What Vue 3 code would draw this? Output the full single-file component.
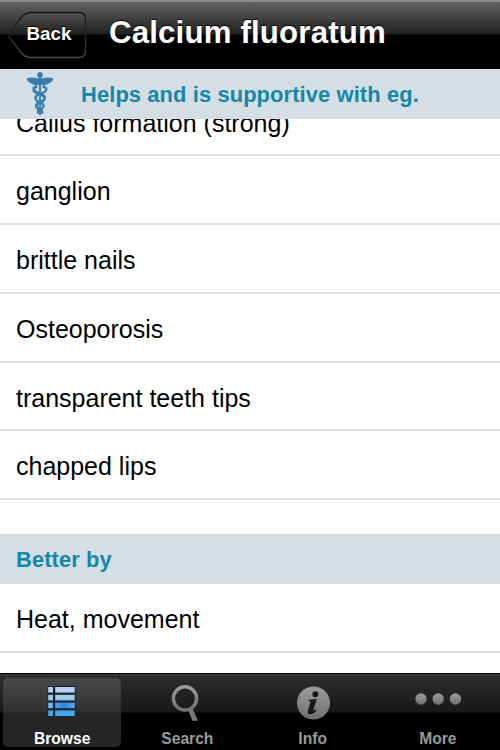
<template>
  <div class="screen">
    <header class="navbar">
      <button class="back-btn">
        <svg class="back-shape" width="80" height="48" viewBox="0 0 80 48">
          <defs>
            <linearGradient id="backFill" x1="0" y1="0" x2="0" y2="1">
              <stop offset="0" stop-color="#545454" />
              <stop offset="0.49" stop-color="#1c1c1c" />
              <stop offset="0.51" stop-color="#020202" />
              <stop offset="1" stop-color="#000" />
            </linearGradient>
            <linearGradient id="backLine" x1="0" y1="0" x2="0" y2="1">
              <stop offset="0" stop-color="#151515" />
              <stop offset="0.5" stop-color="#222" />
              <stop offset="1" stop-color="#4c4c4c" />
            </linearGradient>
          </defs>
          <path
            d="M1.5 25 L13 8 Q18 1.5 24 1.5 H72 Q78.5 1.5 78.5 8 V40 Q78.5 46.5 72 46.5 H24 Q18 46.5 13 40.5 Z"
            fill="url(#backFill)" stroke="url(#backLine)" stroke-width="1.3"
          />
        </svg>
        <span class="back-label">Back</span>
      </button>
      <h1 class="title">Calcium fluoratum</h1>
    </header>

    <div class="section-header">
      <svg class="caduceus" width="30" height="46" viewBox="0 0 30 46" fill="none" stroke="#397fae">
        <circle cx="15" cy="3.8" r="2.9" fill="#397fae" stroke="none" />
        <path
          d="M1.5 7.5 Q7 5.5 12.5 7.5 L15 6 L17.5 7.5 Q23 5.5 28.5 7.5 Q27 12.5 19 14.5 L15 13.5 L11 14.5 Q3 12.5 1.5 7.5 Z"
          fill="#397fae" stroke="none"
        />
        <path d="M15 7 V44" stroke-width="2" />
        <path d="M12.5 16 Q8.5 15.5 8.8 18.5 Q9 21 14 22.5 Q20 24.5 19.5 27.5 Q19 30 15 31.5 Q11 33 11.5 35.5 Q12 37.5 15 38.5 Q18 40 16.5 42.5" stroke-width="3" />
        <path d="M17.5 16 Q21.5 15.5 21.2 18.5 Q21 21 16 22.5 Q10 24.5 10.5 27.5 Q11 30 15 31.5 Q19 33 18.5 35.5 Q18 37.5 15 38.5 Q12 40 13.5 42.5" stroke-width="2.4" />
      </svg>
      <span>Helps and is supportive with eg.</span>
    </div>
    <ul class="list helps">
      <li v-for="item in helps" :key="item" class="row">{{ item }}</li>
    </ul>

    <div class="section-header better"><span>Better by</span></div>
    <ul class="list">
      <li v-for="item in betterBy" :key="item" class="row">{{ item }}</li>
    </ul>

    <nav class="tabbar">
      <div
        v-for="tab in tabs"
        :key="tab"
        :class="['tab', { active: tab === activeTab }]"
        @click="activeTab = tab"
      >
        <svg class="tab-icon" width="50" height="44" viewBox="0 0 50 44">
          <defs>
            <linearGradient id="grey" x1="0" y1="0" x2="0" y2="1">
              <stop offset="0" stop-color="#9b9b9b" />
              <stop offset="1" stop-color="#707070" />
            </linearGradient>
            <linearGradient id="bar3" gradientUnits="userSpaceOnUse" x1="11" y1="0" x2="38" y2="0">
              <stop offset="0" stop-color="#72bcf2" />
              <stop offset="0.6" stop-color="#2587e4" />
              <stop offset="1" stop-color="#58adf0" />
            </linearGradient>
          </defs>
          <g v-if="tab === 'Browse'">
            <rect x="10.5" y="8" width="28" height="31" fill="#17222d" />
            <g v-for="(bar, i) in bars" :key="i" :fill="bar">
              <rect x="11.2" :y="9 + i * 7.8" width="4.8" height="5.6" />
              <rect x="18.2" :y="9 + i * 7.8" width="19.5" height="5.6" />
            </g>
          </g>
          <g v-else-if="tab === 'Search'">
            <circle cx="23" cy="20.4" r="11.6" fill="none" stroke="url(#grey)" stroke-width="3.4" />
            <path d="M26 31.5 L30.2 29.6 L35.8 42.8 L30.4 42.8 Z" fill="#777" />
          </g>
          <g v-else-if="tab === 'Info'">
            <circle cx="25.5" cy="25" r="16.5" fill="url(#grey)" />
            <circle cx="27.4" cy="16.2" r="3" fill="#171717" />
            <path
              d="M21 21.7 L28.8 21 L25.3 32 Q25 33.5 27.5 31.5 L28.5 32.5 Q25.5 36.3 22 36.2 Q19 36 20 32.5 L22.5 24 Q22.7 23 20.8 23 Z"
              fill="#171717"
            />
          </g>
          <g v-else fill="url(#grey)">
            <circle cx="8" cy="21" r="5.7" />
            <circle cx="25.2" cy="21" r="5.7" />
            <circle cx="42.4" cy="21" r="5.7" />
          </g>
        </svg>
        <span class="tab-label">{{ tab }}</span>
      </div>
    </nav>
  </div>
</template>

<script setup>
import { ref } from 'vue'

const helps = [
  'Callus formation (strong)',
  'ganglion',
  'brittle nails',
  'Osteoporosis',
  'transparent teeth tips',
  'chapped lips',
]
const betterBy = ['Heat, movement']

const tabs = ['Browse', 'Search', 'Info', 'More']
const activeTab = ref('Browse')
const bars = ['#b9d3ee', '#9ccbf0', 'url(#bar3)', '#3fa9ea']
</script>

<style>
body {
  margin: 0;
  background: #fff;
}
</style>

<style scoped>
.screen {
  width: 500px;
  height: 750px;
  display: flex;
  flex-direction: column;
  overflow: hidden;
  background: #fff;
  color: #000;
  font-family: "Liberation Sans", Arial, sans-serif;
}

.navbar {
  flex: none;
  box-sizing: border-box;
  height: 69px;
  display: flex;
  padding: 10px 0 0 7px;
  border-top: 2px solid #8b8b8b;
  background: linear-gradient(#636363 0, #202020 32px, #000 33px, #000 100%);
}

.back-btn {
  position: relative;
  width: 80px;
  height: 48px;
  margin-top: -1px;
  padding: 0;
  border: none;
  background: none;
  font-family: inherit;
  cursor: pointer;
}

.back-shape {
  position: absolute;
  top: 0;
  left: 0;
}

.back-label {
  position: relative;
  display: block;
  padding: 0 0 2px 4px;
  line-height: 44px;
  color: #fff;
  font-size: 18.75px;
  font-weight: bold;
  text-shadow: 0 -1px 1px #000;
}

.title {
  margin: 0 0 0 22px;
  color: #fff;
  font-size: 31.25px;
  line-height: 41px;
  letter-spacing: 0.15px;
  white-space: nowrap;
  text-shadow: 0 -1px 1px #000;
}

.section-header {
  flex: none;
  box-sizing: border-box;
  height: 50px;
  display: flex;
  align-items: center;
  padding-left: 25px;
  background: #d4dee5;
  color: #1488a8;
  font-size: 21.875px;
  font-weight: bold;
  letter-spacing: 0.12px;
}

.section-header span {
  padding-top: 2px;
}

.section-header.better {
  margin-top: 34px;
  padding-left: 16px;
}

.caduceus {
  margin-right: 26px;
}

.list {
  flex: none;
  margin: 0;
  padding: 0;
  list-style: none;
}

/* scrolled so that the first row slides under the header */
.helps {
  height: 381px;
  display: flex;
  flex-direction: column;
  justify-content: flex-end;
  overflow: hidden;
}

.row {
  flex: none;
  box-sizing: border-box;
  height: 68.75px;
  padding: 1px 0 0 16px;
  border-bottom: 2px solid #e0e0e0;
  font-size: 25px;
  line-height: 68.75px;
}

.tabbar {
  flex: none;
  box-sizing: border-box;
  height: 77px;
  margin-top: auto;
  display: flex;
  gap: 7px;
  padding: 4px 3px 3px;
  border-top: 1px solid #000;
  background: linear-gradient(#3c3c3c 0, #2d2d2d 2px, #181818 38px, #000 39px);
}

.tab {
  width: 118.5px;
  display: flex;
  flex-direction: column;
  align-items: center;
  border-radius: 5px;
  color: #9a9a9a;
  cursor: pointer;
}

.tab.active {
  background: linear-gradient(#484848 0, #303030 34px, #252525 35px, #252525 100%);
  color: #fff;
}

.tab-icon {
  display: block;
  flex: none;
}

.tab-label {
  margin-top: 8px;
  font-size: 15.625px;
  font-weight: bold;
  line-height: 18px;
}
</style>
